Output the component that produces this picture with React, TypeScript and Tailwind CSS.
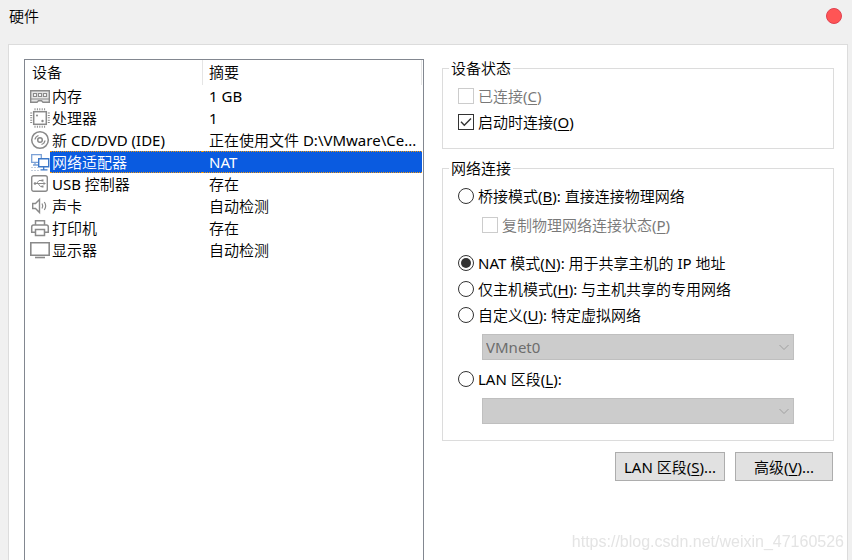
import { useState } from 'react';
import type { ReactNode } from 'react';

interface Device {
  id: string;
  name: string;
  summary: string;
  icon: ReactNode;
}

const devices: Device[] = [
  { id: 'memory', name: '内存', summary: '1 GB', icon: <MemoryIcon /> },
  { id: 'cpu', name: '处理器', summary: '1', icon: <CpuIcon /> },
  { id: 'cd', name: '新 CD/DVD (IDE)', summary: '正在使用文件 D:\\VMware\\Ce...', icon: <DiscIcon /> },
  { id: 'network', name: '网络适配器', summary: 'NAT', icon: <NetworkIcon /> },
  { id: 'usb', name: 'USB 控制器', summary: '存在', icon: <UsbIcon /> },
  { id: 'sound', name: '声卡', summary: '自动检测', icon: <SoundIcon /> },
  { id: 'printer', name: '打印机', summary: '存在', icon: <PrinterIcon /> },
  { id: 'display', name: '显示器', summary: '自动检测', icon: <DisplayIcon /> },
];

function MemoryIcon() {
  return (
    <svg className="block" width="20" height="20" viewBox="0 0 20 20" fill="none" stroke="#8a8a8a" aria-hidden="true">
      <path d="M.7 4.700h18.600v11.600h-6.300l-1.500-1.500h-3l-1.500 1.500H.7z" fill="#e6e6e6" strokeWidth="1.400" />
      <path d="M3.500 7.500h3v3h-3zM8.500 7.500h3v3h-3zM13.500 7.500h3v3h-3z" fill="#fff" strokeWidth="1.200" />
      <path d="M1 13h18" />
    </svg>
  );
}

function CpuIcon() {
  return (
    <svg className="block" width="20" height="20" viewBox="0 0 20 20" fill="none" stroke="#8a8a8a" aria-hidden="true">
      <rect x="3.700" y="3.700" width="12.600" height="12.600" strokeWidth="1.500" />
      <path d="M4.500 1.200h12M4.500 18.800h12M1.200 4.500v12M18.800 4.500v12" strokeWidth="2" strokeDasharray="1 1.400" />
      <circle cx="7" cy="7.500" r="1" fill="#8a8a8a" stroke="none" />
      <circle cx="12.500" cy="13" r="1.200" fill="#8a8a8a" stroke="none" />
    </svg>
  );
}

function DiscIcon() {
  return (
    <svg className="block" width="20" height="20" viewBox="0 0 20 20" fill="none" stroke="#8a8a8a" aria-hidden="true">
      <circle cx="10" cy="10" r="8.300" strokeWidth="1.500" />
      <circle cx="10" cy="10" r="2.300" strokeWidth="1.500" />
      <path d="M5 9.500A5 5 0 0 1 8.500 5.500M15 10.500A5 5 0 0 1 11.500 14.500" strokeWidth="1.300" />
    </svg>
  );
}

function NetworkIcon() {
  return (
    <svg className="block" width="20" height="20" viewBox="0 0 20 20" fill="none" aria-hidden="true">
      <path d="M1.700 2.700h9.600v7.600H1.700zM5 10.500v2.500M3 13h5" fill="#fff" stroke="#7ba1d6" strokeWidth="1.300" />
      <path d="M8.700 6.700h10v8h-10z" fill="#fff" stroke="#3c78c8" strokeWidth="1.400" />
      <path d="M13.700 15v2.800M10.500 17.800h7" stroke="#3c78c8" strokeWidth="1.300" />
      <path d="M1 15.500h7M1 18.500h8" stroke="#c3cedc" strokeDasharray="2 1" />
    </svg>
  );
}

function UsbIcon() {
  return (
    <svg className="block" width="20" height="20" viewBox="0 0 20 20" fill="none" stroke="#8a8a8a" aria-hidden="true">
      <rect x="1.700" y="1.700" width="15.600" height="15.600" rx="2" strokeWidth="1.400" />
      <path d="M5 9.500h9M6.500 9.500L9 6.500h3M8 9.500l2.500 3h2" />
      <circle cx="5" cy="9.500" r="1.300" fill="#8a8a8a" stroke="none" />
      <path d="M13.500 8l2.500 1.500-2.500 1.500zM11.500 5.500h2v2h-2zM11.500 11.500h2v2h-2z" fill="#8a8a8a" stroke="none" />
    </svg>
  );
}

function SoundIcon() {
  return (
    <svg className="block" width="20" height="20" viewBox="0 0 20 20" fill="none" stroke="#8a8a8a" aria-hidden="true">
      <path d="M2.700 7.500h2.800L9.500 3.500v13l-4-4H2.700z" strokeWidth="1.400" />
      <path d="M12 7.500c1 1.600 1 3.400 0 5M14.300 6c1.800 2.600 1.800 5.400 0 8" strokeWidth="1.200" />
    </svg>
  );
}

function PrinterIcon() {
  return (
    <svg className="block" width="20" height="20" viewBox="0 0 20 20" fill="none" stroke="#8a8a8a" strokeWidth="1.500" aria-hidden="true">
      <path d="M5.500 7V2.700h9V7" />
      <path d="M5.500 14.300H1.700V9q0-2 2-2h12.600q2 0 2 2v5.300h-3.800" />
      <path d="M5.500 11.500h9v6h-9z" />
    </svg>
  );
}

function DisplayIcon() {
  return (
    <svg className="block" width="20" height="20" viewBox="0 0 20 20" fill="none" stroke="#8a8a8a" aria-hidden="true">
      <path d="M.8 2.800h18.400v12.400H.8z" strokeWidth="1.600" />
      <path d="M5 17.500h10" strokeWidth="1.600" />
    </svg>
  );
}

interface OptionProps {
  children: ReactNode;
  checked: boolean;
  onChange: () => void;
  disabled?: boolean;
}

function CheckOption({ children, checked, onChange, disabled = false }: OptionProps) {
  return (
    <label className={`flex h-[26px] items-center gap-1 ${disabled ? 'text-[#787878]' : 'text-black'}`}>
      <span className="relative flex size-4 shrink-0">
        <input
          type="checkbox"
          checked={checked}
          onChange={onChange}
          disabled={disabled}
          className="size-4 appearance-none border border-[#333] bg-white disabled:border-[#ccc]"
        />
        {checked && (
          <svg className="pointer-events-none absolute inset-0" width="16" height="16" viewBox="0 0 16 16" fill="none" stroke="#333" strokeWidth="1.400">
            <path d="M3 7.800l3.300 3.400L13 4.500" />
          </svg>
        )}
      </span>
      <span>{children}</span>
    </label>
  );
}

function RadioOption({ children, checked, onChange }: OptionProps) {
  return (
    <label className="flex h-[26px] items-center gap-1">
      <input
        type="radio"
        name="network-mode"
        checked={checked}
        onChange={onChange}
        className="size-4 shrink-0 appearance-none rounded-full border border-[#333] bg-white bg-clip-content p-0.5 checked:bg-[#333]"
      />
      <span>{children}</span>
    </label>
  );
}

function DisabledSelect({ label, value }: { label: string; value: string }) {
  return (
    <div className="relative my-1.5 ml-6 mr-6">
      <select
        disabled
        aria-label={label}
        className="block h-[26px] w-full appearance-none border border-[#bfbfbf] bg-[#ccc] px-[3px] text-[#6d6d6d] opacity-100"
      >
        <option>{value}</option>
      </select>
      <svg className="pointer-events-none absolute right-1 top-2" width="12" height="10" viewBox="0 0 12 10" fill="none" stroke="#a0a0a0">
        <path d="M1.500 3l4.500 4.500L10.500 3" />
      </svg>
    </div>
  );
}

function Key({ children }: { children: string }) {
  return (
    <>
      (<span className="underline underline-offset-2">{children}</span>)
    </>
  );
}

export default function App() {
  const [selected, setSelected] = useState('network');
  const [mode, setMode] = useState('nat');
  const [connectAtStart, setConnectAtStart] = useState(true);

  return (
    <div className="flex h-screen flex-col overflow-hidden bg-[#f0f0f0] font-['Noto_Sans','Noto_Sans_CJK_SC_DemiLight','Noto_Sans_CJK_SC',sans-serif] text-[15px] leading-5 text-black">
      <header className="flex h-11 shrink-0 items-start justify-between pl-[9px] pr-2.5">
        <h1 className="pt-1.5">硬件</h1>
        <button aria-label="关闭" className="mt-2 size-4 rounded-full border border-[#e04050] bg-[#ff5555]" />
      </header>

      <main className="ml-2 mr-1 flex min-h-0 flex-1 gap-[18px] border border-b-0 border-[#dcdcdc] bg-white pl-[15px] pr-[13px]">
        {/* Device list */}
        <div className="mt-3.5 min-w-0 flex-[397] border border-b-0 border-[#828790] pr-px">
          <table className="w-full table-fixed border-separate border-spacing-0 whitespace-nowrap text-left">
            <colgroup>
              <col className="w-[25px]" />
              <col className="w-[152px]" />
              <col />
            </colgroup>
            <thead>
              <tr className="h-[25px]">
                <th colSpan={2} className="p-0 pb-0.5 pl-[7px] font-normal">设备</th>
                <th className="border-x border-[#e5e5e5] p-0 pb-0.5 pl-1.5 font-normal">摘要</th>
              </tr>
            </thead>
            <tbody>
              {devices.map((device) => {
                const cell =
                  device.id === selected
                    ? 'border-y border-dotted border-[#f09a10] bg-[#0a5be0] text-white'
                    : 'border-y border-transparent';
                return (
                  <tr key={device.id} onClick={() => setSelected(device.id)} className="h-[22px] leading-5">
                    <td className="p-0 pl-[5px]">{device.icon}</td>
                    <td className={`p-0 pl-0.5 ${cell}`}>{device.name}</td>
                    <td className={`p-0 pl-[7px] ${cell}`}>{device.summary}</td>
                  </tr>
                );
              })}
            </tbody>
          </table>
        </div>

        {/* Adapter settings */}
        <div className="min-w-0 flex-[392] pt-[13px]">
          <fieldset className="border border-[#dcdcdc] px-1.5 pb-[13px]">
            <legend className="h-5 px-0.5">设备状态</legend>
            <div className="pl-[9px] pt-[5px]">
              <CheckOption checked={false} onChange={() => {}} disabled>
                已连接<Key>C</Key>
              </CheckOption>
              <CheckOption checked={connectAtStart} onChange={() => setConnectAtStart(!connectAtStart)}>
                启动时连接<Key>O</Key>
              </CheckOption>
            </div>
          </fieldset>

          <fieldset className="mt-[9px] border border-[#dcdcdc] px-1.5 pb-2.5">
            <legend className="h-5 px-0.5">网络连接</legend>
            <div className="px-[9px] pt-[5px]">
              <RadioOption checked={mode === 'bridged'} onChange={() => setMode('bridged')}>
                桥接模式<Key>B</Key>: 直接连接物理网络
              </RadioOption>
              <div className="mb-3 ml-6 mt-[3px]">
                <CheckOption checked={false} onChange={() => {}} disabled>
                  复制物理网络连接状态<Key>P</Key>
                </CheckOption>
              </div>
              <RadioOption checked={mode === 'nat'} onChange={() => setMode('nat')}>
                NAT 模式<Key>N</Key>: 用于共享主机的 IP 地址
              </RadioOption>
              <RadioOption checked={mode === 'host'} onChange={() => setMode('host')}>
                仅主机模式<Key>H</Key>: 与主机共享的专用网络
              </RadioOption>
              <RadioOption checked={mode === 'custom'} onChange={() => setMode('custom')}>
                自定义<Key>U</Key>: 特定虚拟网络
              </RadioOption>
              <DisabledSelect label="特定虚拟网络" value="VMnet0" />
              <RadioOption checked={mode === 'lan'} onChange={() => setMode('lan')}>
                LAN 区段<Key>L</Key>:
              </RadioOption>
              <DisabledSelect label="LAN 区段" value="" />
            </div>
          </fieldset>

          <div className="mt-[11px] flex justify-end gap-2.5 pr-px">
            <button className="h-[29px] w-[110px] border border-[#adadad] bg-[#e1e1e1]">
              LAN 区段<Key>S</Key>...
            </button>
            <button className="h-[29px] w-[98px] border border-[#adadad] bg-[#e1e1e1]">
              高级<Key>V</Key>...
            </button>
          </div>
        </div>
      </main>

      <p className="pointer-events-none fixed bottom-2 right-2 font-['Liberation_Sans',sans-serif] text-base leading-5 text-[#e4e4e4]">
        https://blog.csdn.net/weixin_47160526
      </p>
    </div>
  );
}
